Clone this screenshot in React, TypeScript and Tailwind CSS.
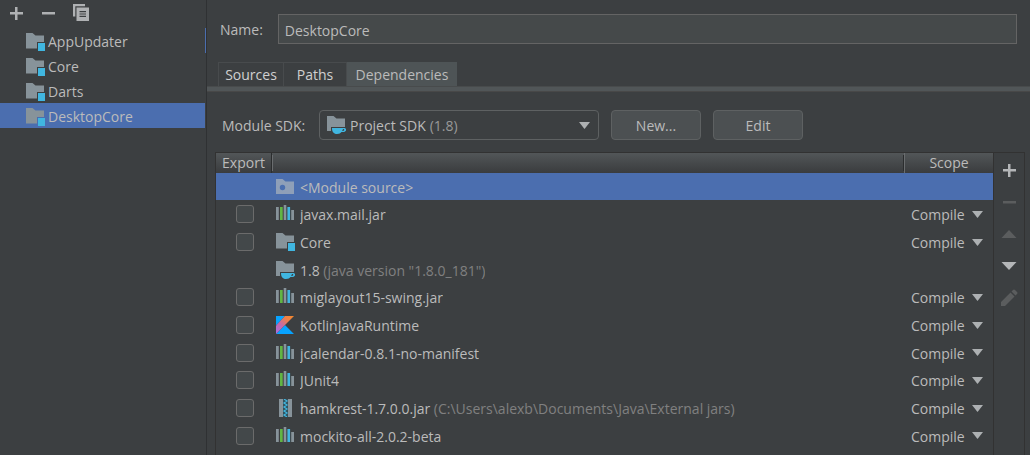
import React from "react";

type IconProps = { className?: string };

function ModuleIcon({ className = "" }: IconProps) {
  return (
    <svg viewBox="0 0 19 18" className={`h-[18px] w-[19px] shrink-0 ${className}`} aria-hidden="true">
      <path d="M0 0h6.500l3 2.500H18V9h-7v6.500H0z" fill="#87939a" />
      <path d="M12 10h7v8h-7z" fill="#40b6e0" />
    </svg>
  );
}

function SdkIcon() {
  return (
    <svg viewBox="0 0 19 18" className="h-[18px] w-[19px] shrink-0" aria-hidden="true">
      <path d="M0 0h6.500l3 2.500H18v8.500H4v4H0z" fill="#87939a" />
      <path
        fillRule="evenodd"
        d="M5 12h12c3 0 3 4-1 4h-1.500c-1 1.300-2 2-4.500 2-3.500 0-5-2.500-5-6zm11 1-.8 2c2 .3 3-2 .8-2z"
        fill="#40b6e0"
      />
    </svg>
  );
}

function SourceIcon() {
  return (
    <svg viewBox="0 0 19 18" className="h-[18px] w-[19px] shrink-0" aria-hidden="true">
      <path d="M0 1h6.500l3 2.500H18V16H0z" fill="#8f9fb8" />
      <circle cx="6.500" cy="9.500" r="2.700" fill="#4b6eaf" />
    </svg>
  );
}

function LibraryIcon() {
  return (
    <svg viewBox="0 0 19 18" className="h-[18px] w-[19px] shrink-0" aria-hidden="true">
      <path d="M0 2h2.800v13H0zM7.700 0h2.600v15H7.700zM15.200 5H18v10h-2.800z" fill="#87939a" />
      <path d="M4 2h2.700v13H4z" fill="#62b543" />
      <path d="M11.400 2h2.700v13h-2.700z" fill="#40b6e0" />
    </svg>
  );
}

function KotlinIcon() {
  return (
    <svg viewBox="0 0 19 18" className="h-[18px] w-[19px] shrink-0" aria-hidden="true">
      <defs>
        <linearGradient id="kotlin" x1="0" y1="1" x2="1" y2="0">
          <stop offset="0" stopColor="#a66fe8" />
          <stop offset=".4" stopColor="#c46aa8" />
          <stop offset=".7" stopColor="#ec7f48" />
          <stop offset="1" stopColor="#f58a2a" />
        </linearGradient>
      </defs>
      <path d="M0 0h9L0 9.500zM0 18l9-9 9 9z" fill="#07a3ff" />
      <path d="M9 0h9L0 18V9.500z" fill="url(#kotlin)" />
    </svg>
  );
}

function ArchiveIcon() {
  return (
    <svg viewBox="0 0 19 18" className="h-[18px] w-[19px] shrink-0" aria-hidden="true">
      <path d="M3 0h4v18H3zM12 0h4v18h-4z" fill="#87939a" />
      <path d="M7 0h5v18H7z" fill="#33505c" />
      <path
        d="M8 0l3 2-3 2 3 2-3 2 3 2-3 2 3 2-3 2 3 2"
        fill="none"
        stroke="#40b6e0"
        strokeWidth="1.200"
      />
    </svg>
  );
}

function Glyph({ d }: { d: string }) {
  return (
    <svg viewBox="0 0 18 18" className="size-[18px] shrink-0 fill-current" aria-hidden="true">
      <path fillRule="evenodd" d={d} />
    </svg>
  );
}

const PLUS = "M8 3h2.500v5H16v2.500h-5.500V16H8v-5.500H3V8h5z";
const MINUS = "M3 8h13v2.500H3z";
const COPY =
  "M2 0h12v2.200H4.300v10.300H2zM5.500 3.500H18V17H5.500zM8.500 7v1.200H15V7zm0 2.400v1.200H15V9.400zm0 2.400V13H15v-1.200z";
const UP = "M1.500 13h15L9 5z";
const DOWN = "M1.500 5h15L9 13z";
const PENCIL = "M1 17v-4L10.500 3.500l4 4L5 17zM11.500 2.500l1.500-1.500q1-1 2 0l2 2q1 1 0 2L15.500 6.500z";

function Caret() {
  return (
    <svg viewBox="0 0 11 7" className="h-[7px] w-[11px] shrink-0 fill-[#adb0b2]" aria-hidden="true">
      <path d="M0 0h11L5.500 7z" />
    </svg>
  );
}

const modules = ["AppUpdater", "Core", "Darts", "DesktopCore"];

type Dependency = { name: string; detail?: string; icon: () => React.ReactElement; exportable: boolean };

const CoreIcon = () => <ModuleIcon />;

const dependencies: Dependency[] = [
  { name: "<Module source>", icon: SourceIcon, exportable: false },
  { name: "javax.mail.jar", icon: LibraryIcon, exportable: true },
  { name: "Core", icon: CoreIcon, exportable: true },
  { name: "1.8", detail: '(java version "1.8.0_181")', icon: SdkIcon, exportable: false },
  { name: "miglayout15-swing.jar", icon: LibraryIcon, exportable: true },
  { name: "KotlinJavaRuntime", icon: KotlinIcon, exportable: true },
  { name: "jcalendar-0.8.1-no-manifest", icon: LibraryIcon, exportable: true },
  { name: "JUnit4", icon: LibraryIcon, exportable: true },
  { name: "hamkrest-1.7.0.0.jar", detail: "(C:\\Users\\alexb\\Documents\\Java\\External jars)", icon: ArchiveIcon, exportable: true },
  { name: "mockito-all-2.0.2-beta", icon: LibraryIcon, exportable: true },
];

const listActions = [
  { label: "Add", d: PLUS, enabled: true },
  { label: "Remove", d: MINUS, enabled: false },
  { label: "Move up", d: UP, enabled: false },
  { label: "Move down", d: DOWN, enabled: true },
  { label: "Edit entry", d: PENCIL, enabled: false },
];

function Sidebar() {
  const [active, setActive] = React.useState("DesktopCore");
  return (
    <aside className="flex w-[207px] shrink-0 border-r border-[#2f3133]">
      <div className="min-w-0 flex-1">
        <div className="flex h-7 items-start gap-[14px] px-[7px] pt-1 text-[#afb1b3]">
          <button type="button" aria-label="Add module" className="size-[18px]"><Glyph d={PLUS} /></button>
          <button type="button" aria-label="Remove module" className="size-[18px]"><Glyph d={MINUS} /></button>
          <button type="button" aria-label="Copy module" className="size-[18px]"><Glyph d={COPY} /></button>
        </div>
        <ul>
          {modules.map((name) => (
            <li key={name}>
              <button
                type="button"
                onClick={() => setActive(name)}
                className={`flex h-[25px] w-full items-center gap-[3px] pt-0.5 pl-[26px] text-left ${active === name ? "bg-[#4b6eaf]" : ""}`}
              >
                <ModuleIcon />
                {name}
              </button>
            </li>
          ))}
        </ul>
      </div>
      <div className="mt-7 h-[25px] w-px bg-[#4b6eaf]" />
    </aside>
  );
}

function Tabs() {
  const base = "h-6 border border-b-0 pt-px";
  return (
    <div className="border-b border-[#484848]">
      <div role="tablist" className="flex pl-[11px]">
        <button type="button" role="tab" aria-selected="false" className={`${base} w-[66px] border-[#484b4d] text-[#d0d0d0]`}>Sources</button>
        <button type="button" role="tab" aria-selected="false" className={`${base} w-[63px] border-l-0 border-[#484b4d] text-[#d0d0d0]`}>Paths</button>
        <button type="button" role="tab" aria-selected="true" className={`${base} w-[110px] border-[#4e5456] bg-[#4e5456]`}>Dependencies</button>
      </div>
      <div className="h-[5px] border-t border-[#484b4c] bg-[#515658]" />
    </div>
  );
}

function ScopeSelect({ name }: { name: string }) {
  return (
    <div className="flex items-center gap-[7px] pl-[7px]">
      <select aria-label={`Scope of ${name}`} className="field-sizing-content appearance-none bg-transparent pt-0.5">
        <option>Compile</option>
        <option>Test</option>
        <option>Runtime</option>
        <option>Provided</option>
      </select>
      <Caret />
    </div>
  );
}

function DependencyTable() {
  return (
    <table className="w-full table-fixed border-collapse self-start text-left">
      <colgroup>
        <col className="w-[56px]" />
        <col />
        <col className="w-[89px]" />
      </colgroup>
      <thead>
        <tr className="h-5 bg-linear-to-b from-[#525658] to-[#3a3c3e]">
          <th scope="col" className="p-0 font-normal">
            <div className="h-5 border-r border-[#2b2d2e] text-center">Export</div>
          </th>
          <th scope="col" aria-label="Dependency" className="p-0">
            <div className="h-4 border-x border-l-[#6a6d6f] border-r-[#2b2d2e]" />
          </th>
          <th scope="col" className="p-0 font-normal">
            <div className="h-5 border-l border-[#6a6d6f] text-center">Scope</div>
          </th>
        </tr>
      </thead>
      <tbody>
        {dependencies.map((dep, i) => {
          const Icon = dep.icon;
          return (
            <tr key={dep.name} className={`h-7 nth-[3n+1]:h-[27px] ${i === 0 ? "bg-[#4b6eaf]" : ""}`}>
              <td className="p-0">
                {dep.exportable && (
                  <input
                    type="checkbox"
                    aria-label={`Export ${dep.name}`}
                    className="ml-5 block size-[18px] appearance-none rounded-[3px] border border-[#6b6b6b] bg-[#43484a] checked:bg-[#4b6eaf]"
                  />
                )}
              </td>
              <td className="p-0">
                <div className="flex items-center gap-[5px] pl-1">
                  <Icon />
                  <span className="truncate pt-0.5">
                    {dep.name}
                    {dep.detail && <span className="text-[#808080]"> {dep.detail}</span>}
                  </span>
                </div>
              </td>
              <td className="p-0">{i > 0 && dep.name !== "1.8" && <ScopeSelect name={dep.name} />}</td>
            </tr>
          );
        })}
      </tbody>
    </table>
  );
}

export default function App() {
  return (
    <div className="flex min-h-screen bg-[#3c3f41] font-['Open_Sans','Noto_Sans',sans-serif] text-[14px] leading-5 text-[#bbbbbb]">
      <Sidebar />
      <main className="flex min-w-0 flex-1 flex-col">
        <div className="flex items-center gap-[15px] pt-[14px] pr-[13px] pb-[18px] pl-[13px]">
          <label htmlFor="module-name" className="pt-0.5">Name:</label>
          <input
            id="module-name"
            defaultValue="DesktopCore"
            className="h-[30px] min-w-0 flex-1 border border-[#646464] bg-[#45494a] px-[6px] pt-0.5 outline-none"
          />
        </div>
        <Tabs />
        <div className="flex items-center pt-[18px] pb-3 pl-[15px]">
          <label htmlFor="sdk" className="w-[97px] pt-0.5">Module SDK:</label>
          <div className="flex h-[30px] w-[280px] items-center rounded-[4px] border border-[#5e6162] pr-2 pl-[7px]">
            <SdkIcon />
            <select id="sdk" className="ml-1 field-sizing-content appearance-none bg-transparent pt-0.5 outline-none">
              <option>Project SDK</option>
            </select>
            <span className="ml-1 flex-1 pt-0.5 text-[#999999]">(1.8)</span>
            <Caret />
          </div>
          <button type="button" className="ml-3 h-[30px] w-[90px] rounded-[4px] border border-[#5e6162] bg-[#4c5052] pt-0.5">New...</button>
          <button type="button" className="ml-3 h-[30px] w-[90px] rounded-[4px] border border-[#5e6162] bg-[#4c5052] pt-0.5">Edit</button>
        </div>
        <div className="mr-[5px] ml-2 flex flex-1 border-x border-t border-[#323232]">
          <DependencyTable />
          <div className="flex w-[31px] shrink-0 flex-col items-center gap-[14px] border-l border-[#323232] pt-2">
            {listActions.map((a) => (
              <button
                key={a.label}
                type="button"
                aria-label={a.label}
                disabled={!a.enabled}
                className="size-[18px] text-[#b4b6b8] disabled:text-[#5b5d5e]"
              >
                <Glyph d={a.d} />
              </button>
            ))}
          </div>
        </div>
      </main>
    </div>
  );
}
